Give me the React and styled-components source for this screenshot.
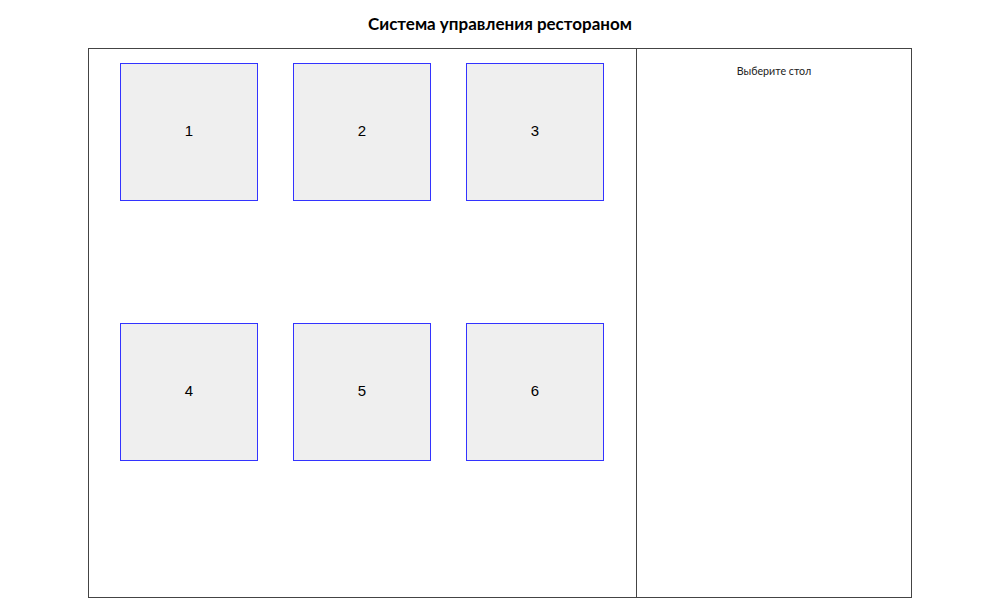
import React from "react";
import styled, { createGlobalStyle } from "styled-components";

const Global = createGlobalStyle`
  html, body { margin: 0; padding: 0; background: #fff; }
  body { font-family: Lato, "Open Sans", sans-serif; }
`;

const Page = styled.div`
  width: 1000px;
  height: 600px;
  display: flex;
  flex-direction: column;
  align-items: center;
  overflow: hidden;
`;

const Title = styled.h1`
  margin: 0;
  height: 48px;
  display: flex;
  align-items: center;
  font-family: Lato, "Open Sans", sans-serif;
  font-size: 17px;
  font-weight: 700;
  color: #000;
  padding-bottom: 1px;
  box-sizing: border-box;
`;

const Frame = styled.div`
  width: 824px;
  height: 550px;
  box-sizing: border-box;
  border: 1px solid #444;
  display: flex;
`;

const Hall = styled.div`
  flex: 0 0 548px;
  box-sizing: border-box;
  border-right: 1px solid #444;
  display: grid;
  grid-template-columns: repeat(3, 138px);
  grid-template-rows: repeat(2, 138px);
  justify-content: center;
  align-content: start;
  column-gap: 35px;
  row-gap: 122px;
  padding: 14px 1px 0 0;
`;

const Table = styled.button`
  width: 138px;
  height: 138px;
  box-sizing: border-box;
  border: 1px solid #3333ff;
  background: #efefef;
  font-family: "Liberation Sans", Arial, sans-serif;
  font-size: 15px;
  color: #000;
  padding: 0 0 3px;
  cursor: pointer;
`;

const Side = styled.div`
  flex: 1;
  display: flex;
  justify-content: center;
  align-items: flex-start;
  padding-top: 15px;
`;

const Hint = styled.div`
  font-family: Lato, "Open Sans", sans-serif;
  font-size: 10.7px;
  color: #222;
`;

export default function App() {
  return (
    <>
      <Global />
      <Page>
        <Title>Система управления рестораном</Title>
        <Frame>
          <Hall>
            {[1, 2, 3, 4, 5, 6].map((n) => (
              <Table key={n}>{n}</Table>
            ))}
          </Hall>
          <Side>
            <Hint>Выберите стол</Hint>
          </Side>
        </Frame>
      </Page>
    </>
  );
}
